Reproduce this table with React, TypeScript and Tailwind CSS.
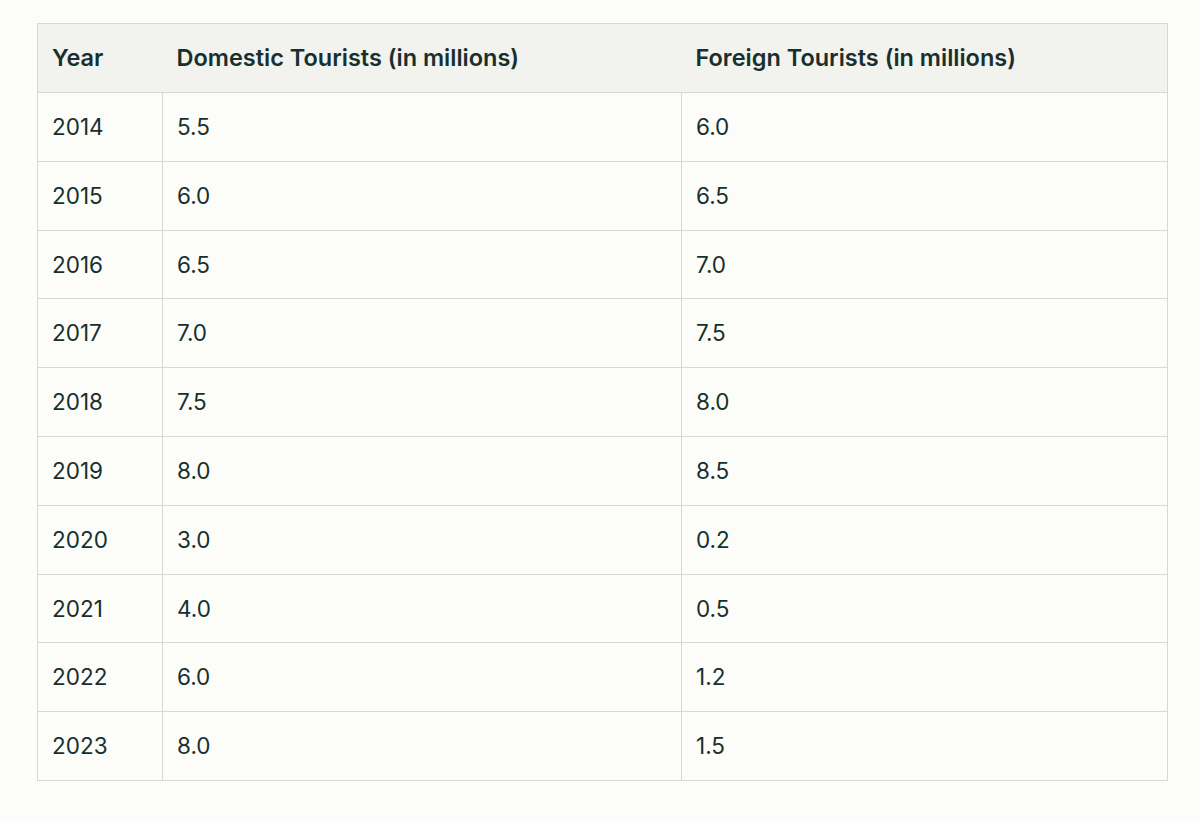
const rows: [string, string, string][] = [
  ['2014', '5.5', '6.0'],
  ['2015', '6.0', '6.5'],
  ['2016', '6.5', '7.0'],
  ['2017', '7.0', '7.5'],
  ['2018', '7.5', '8.0'],
  ['2019', '8.0', '8.5'],
  ['2020', '3.0', '0.2'],
  ['2021', '4.0', '0.5'],
  ['2022', '6.0', '1.2'],
  ['2023', '8.0', '1.5'],
]

export default function App() {
  return (
    <div
      className="min-h-[821px] w-[1200px] bg-[#fcfcf9] pt-[23px] pl-[37px] text-[#17302e]"
      style={{ fontFamily: 'Inter, "Liberation Sans", sans-serif' }}
    >
      <table className="w-[1131px] table-fixed border-collapse border border-[#d8d8d3] text-[22.5px]">
        <colgroup>
          <col className="w-[125px]" />
          <col className="w-[519px]" />
          <col />
        </colgroup>
        <thead>
          <tr className="h-[69px] bg-[#f2f2ee] text-[23.5px]">
            <th className="px-[14px] text-left font-semibold">Year</th>
            <th className="px-[14px] text-left font-semibold">Domestic Tourists (in millions)</th>
            <th className="px-[14px] text-left font-semibold">Foreign Tourists (in millions)</th>
          </tr>
        </thead>
        <tbody>
          {rows.map(([year, dom, foreign]) => (
            <tr key={year} className="h-[68.8px]">
              <td className="border border-[#d8d8d3] px-[14px]">{year}</td>
              <td className="border border-[#d8d8d3] px-[14px]">{dom}</td>
              <td className="border border-[#d8d8d3] px-[14px]">{foreign}</td>
            </tr>
          ))}
        </tbody>
      </table>
    </div>
  )
}
